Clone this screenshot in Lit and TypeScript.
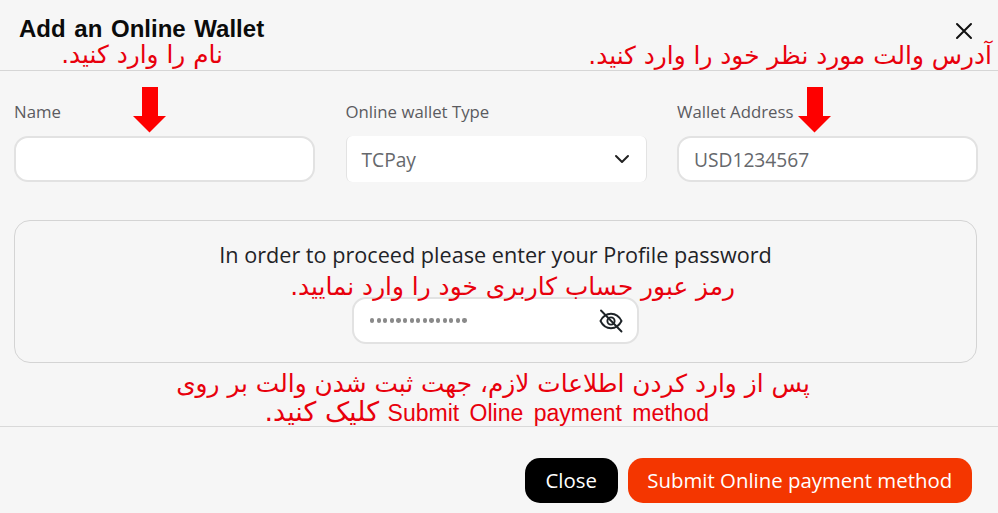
import { LitElement, html, css } from "lit";
import { customElement } from "lit/decorators.js";

const arrow = (cls: string) => html`<svg class="arrow ${cls}" width="33" height="46" viewBox="0 0 33 46"><path d="M9 0H25V29H33L16.500 45.500 0 29H9Z" fill="#fe0000"/></svg>`;

@customElement("app-root")
export class AppRoot extends LitElement {
  static styles = css`
    :host { display: block; position: relative; width: 998px; height: 513px; overflow: hidden; background: #f6f6f6; font-family: "Open Sans", sans-serif; color: #212529; }
    * { box-sizing: border-box; }
    .header { height: 71px; border-bottom: 1px solid #d6d6d6; display: flex; justify-content: space-between; align-items: flex-start; padding: 13px 25px 0 19px; }
    h1 { margin: 0; font: bold 24px/32px "Liberation Sans", sans-serif; color: #0b0b0b; word-spacing: 2px; }
    .x { margin-top: 9px; display: block; }
    .body { height: 356px; border-bottom: 1px solid #d9d9d9; padding: 31px 21px 0 14px; }
    .fields { display: grid; grid-template-columns: repeat(3, 301px); column-gap: 30.500px; }
    label { display: block; font-size: 16.800px; line-height: 20px; color: #5b5b5f; margin-bottom: 14px; }
    .input { height: 46px; background: #fff; border: 2px solid #e2e2e2; border-radius: 14px; font-size: 19.200px; color: #66686c; display: flex; align-items: center; padding: 0 15px; }
    .select { border: 0; border-left: 1px solid #e3e3e3; border-right: 1px solid #e3e3e3; border-radius: 6px; justify-content: space-between; padding: 0 16px 0 15px; }
    .card { margin-top: 38px; height: 143px; border: 1.500px solid #d4d4d4; border-radius: 16px; display: flex; flex-direction: column; align-items: center; padding-top: 19px; }
    .card p { margin: 0 0 27px; font-size: 21.650px; line-height: 30px; color: #1f2327; }
    .pw { width: 287px; height: 47px; background: #fff; border: 2px solid #e2e2e2; border-radius: 14px; display: flex; justify-content: space-between; align-items: center; padding: 0 14px 0 16px; }
    .dots { display: flex; gap: 2.300px; }
    .dots i { width: 4.300px; height: 4.300px; border-radius: 50%; background: #8a8a8a; }
    .footer { display: flex; justify-content: flex-end; gap: 10px; padding: 31px 26px 0 0; }
    button { height: 45px; border: 0; border-radius: 15px; color: #fff; font: 500 20.400px/45px "Open Sans", sans-serif; padding: 0; }
    .close { width: 92.500px; background: #000; }
    .submit { width: 344.500px; background: #f43600; }
    .note { position: absolute; margin: 0; color: #e8000c; font-family: "DejaVu Sans", sans-serif; white-space: nowrap; direction: rtl; font-size: 24.800px; line-height: 30px; }
    .n1 { right: 775px; top: 40px; }
    .n2 { right: 6px; top: 41px; }
    .n3 { right: 263px; top: 272px; }
    .n4 { right: 188px; top: 369px; }
    .n5 { right: 289px; top: 397px; font-size: 27px; }
    .n5 span { font: 23px/30px "Liberation Sans", sans-serif; word-spacing: 4px; }
    .arrow { position: absolute; }
    .a1 { left: 133px; top: 87px; }
    .a2 { left: 798px; top: 87px; }
  `;

  render() {
    return html`
      <div class="header">
        <h1>Add an Online Wallet</h1>
        <svg class="x" width="18" height="18" viewBox="0 0 18 18"><path d="M2 2 16 16M16 2 2 16" stroke="#111" stroke-width="2" stroke-linecap="round"/></svg>
      </div>
      <div class="body">
        <div class="fields">
          <div><label>Name</label><div class="input"></div></div>
          <div>
            <label>Online wallet Type</label>
            <div class="input select">TCPay
              <svg width="16" height="10" viewBox="0 0 16 10"><path d="M2 2 8 8 14 2" fill="none" stroke="#222" stroke-width="2" stroke-linecap="round" stroke-linejoin="round"/></svg>
            </div>
          </div>
          <div><label>Wallet Address</label><div class="input">USD1234567</div></div>
        </div>
        <div class="card">
          <p>In order to proceed please enter your Profile password</p>
          <div class="pw">
            <span class="dots">${Array.from({ length: 15 }, () => html`<i></i>`)}</span>
            <svg width="24" height="24" viewBox="0 0 24 24" fill="none" stroke="#1d2327" stroke-width="1.900" stroke-linecap="round">
              <path d="M1.500 12C4 7 8 4.800 12 4.800S20 7 22.500 12C20 17 16 19.200 12 19.200S4 17 1.500 12Z"/>
              <circle cx="12" cy="12" r="3.600"/>
              <path d="M2 1.500 22.500 22.500"/>
            </svg>
          </div>
        </div>
      </div>
      <div class="footer">
        <button class="close">Close</button>
        <button class="submit">Submit Online payment method</button>
      </div>
      <p class="note n1">نام را وارد کنید.</p>
      <p class="note n2">آدرس والت مورد نظر خود را وارد کنید.</p>
      <p class="note n3">رمز عبور حساب کاربری خود را وارد نمایید.</p>
      <p class="note n4">پس از وارد کردن اطلاعات لازم، جهت ثبت شدن والت بر روی</p>
      <p class="note n5"><span dir="ltr">Submit Oline payment method</span> کلیک کنید.</p>
      ${arrow("a1")}${arrow("a2")}
    `;
  }
}
